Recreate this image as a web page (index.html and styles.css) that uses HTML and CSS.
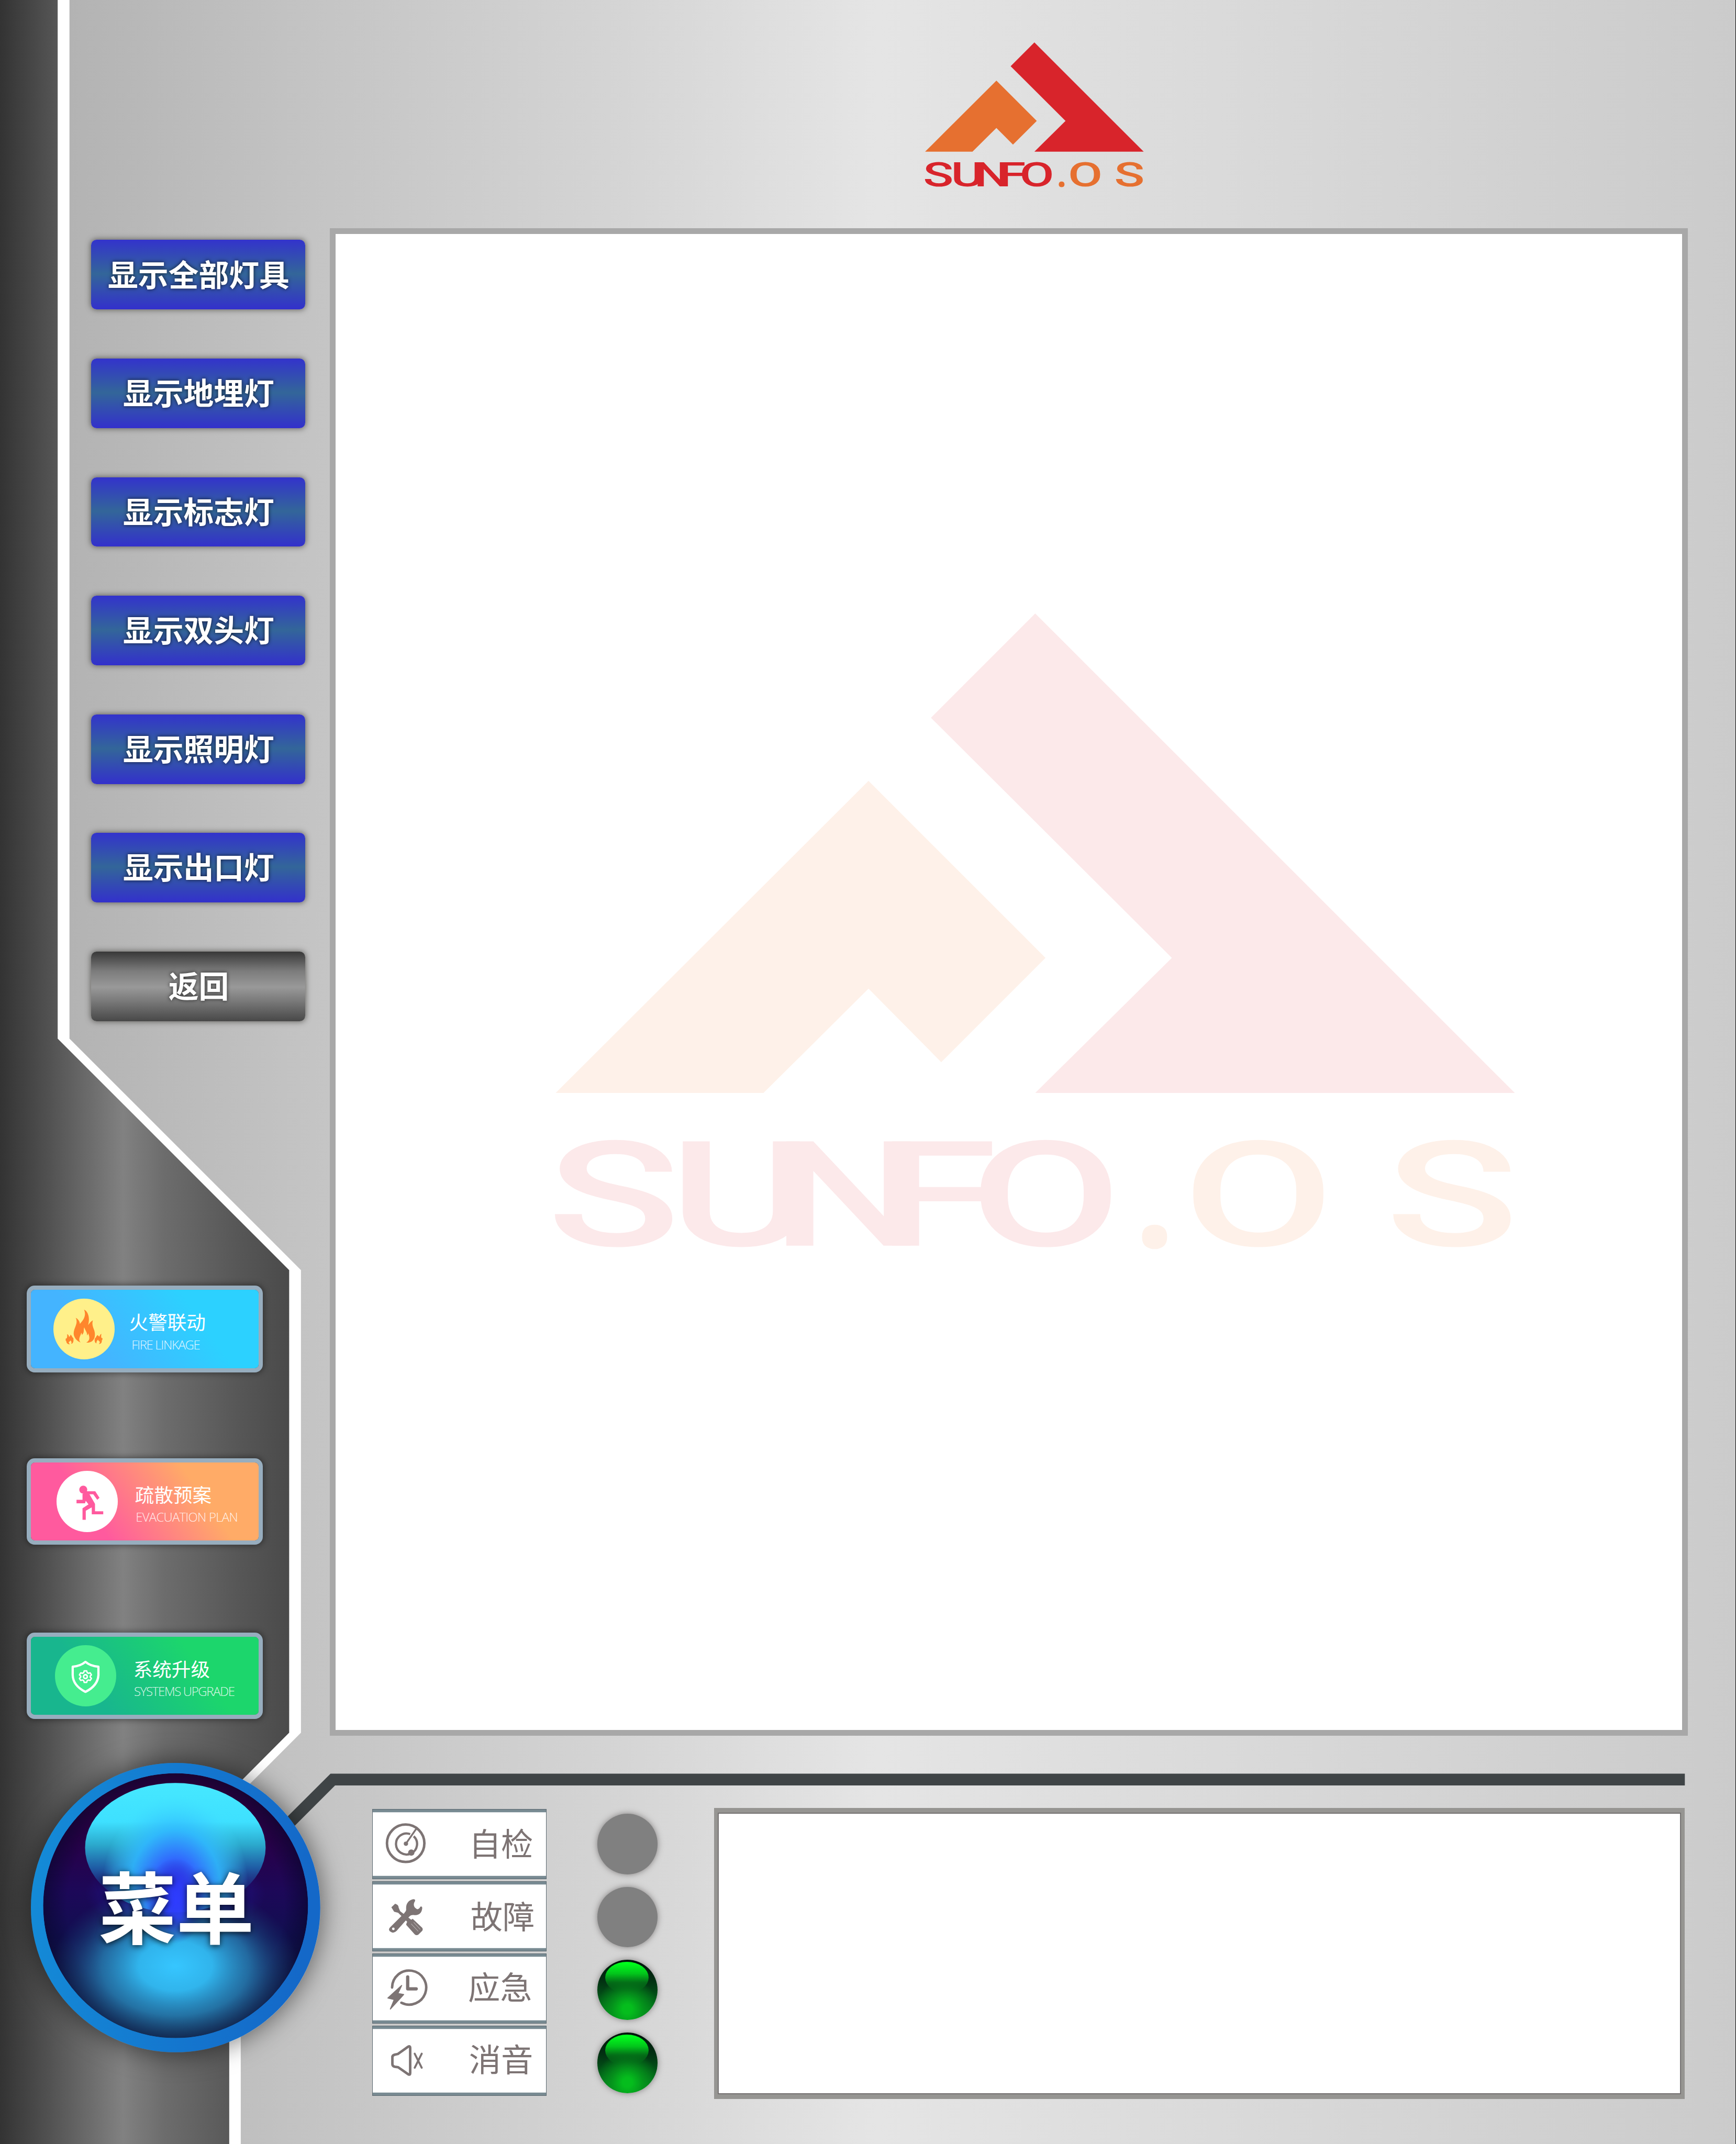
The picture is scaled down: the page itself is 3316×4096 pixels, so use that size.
FILE: index.html
```html
<!DOCTYPE html>
<html lang="zh-CN">
<head>
<meta charset="utf-8">
<title>SUNFO.OS</title>
<link rel="stylesheet" href="styles.css">
</head>
<body>
<div class="page">
  <svg class="frame" viewBox="0 0 3461 4275" preserveAspectRatio="none" aria-hidden="true">
    <defs>
      <linearGradient id="steel" gradientUnits="userSpaceOnUse" x1="0" y1="0" x2="577" y2="0">
        <stop offset="0" stop-color="#333"/>
        <stop offset=".14" stop-color="#4c4c4c"/>
        <stop offset=".36" stop-color="#757575"/>
        <stop offset=".425" stop-color="#818181"/>
        <stop offset=".57" stop-color="#6c6c6c"/>
        <stop offset=".82" stop-color="#575757"/>
        <stop offset="1" stop-color="#4a4a4a"/>
      </linearGradient>
    </defs>
    <path fill="#fff" d="M0 0H138.500V2071L600 2532.500V3455L480 3575V4275H0Z"/>
    <path fill="url(#steel)" d="M0 0H115V2071L576.500 2532.500V3455L457 3575V4275H0Z"/>
    <path fill="#3f4446" d="M659 3536.500H3359V3560H668L500 3728V3695Z"/>
    <path fill="#000" d="M3460 0h1v4275h-1z"/>
  </svg>

  <aside class="sidebar">
    <nav class="filters">
      <button class="filter">显示全部灯具</button>
      <button class="filter">显示地埋灯</button>
      <button class="filter">显示标志灯</button>
      <button class="filter">显示双头灯</button>
      <button class="filter">显示照明灯</button>
      <button class="filter">显示出口灯</button>
      <button class="filter filter--back">返回</button>
    </nav>

    <div class="features">
      <a class="feature feature--fire">
        <span class="feature__icon">
          <svg viewBox="0 0 364 364">
            <g fill="#ff862c">
              <path d="M183 66C207 76 220 115 207 158C214 151 224 134 236 130C225 165 248 180 248 214C248 244 232 264 196 263C225 247 213 221 208 206C207 213 204 217 200 219C205 204 190 190 184 171C178 190 187 202 170 217C170 210 169 206 166 204C164 221 143 244 163 262C137 252 121 229 121 207C121 176 151 147 133 114C147 121 158 136 158 151C174 132 200 105 183 66Z"/>
              <path d="M82 212C90 216 94 223 93 229C99 225 103 221 101 215C114 222 109 230 119 235C122 254 119 267 106 270C112 259 105 253 101 249C101 254 96 256 92 259C91 264 94 269 99 273C84 273 77 263 77 253C70 251 75 243 74 237C81 242 84 228 82 212Z"/>
              <path d="M287 210C279 214 275 221 276 227C270 225 266 221 266 217C252 224 259 230 249 235C242 252 250 265 257 267C256 256 262 249 267 245C267 252 273 253 277 257C278 263 275 267 271 271C286 270 290 261 289 249C295 246 292 239 294 235C286 239 283 228 287 210Z"/>
            </g>
          </svg>
        </span>
        <span class="feature__text"><b>火警联动</b><small>FIRE LINKAGE</small></span>
      </a>
      <a class="feature feature--plan">
        <span class="feature__icon">
          <svg viewBox="0 0 122 122">
            <g fill="#ff5a9e">
              <circle cx="53.500" cy="37.500" r="8"/>
              <path d="M52 46.500 60 41H77.500L86 54 81.500 58 73.500 47H66L77 66V81H93.500V87H70.500V73L58.500 80V98H52V75L64 67 58.500 60 57 65H40V58H52Z"/>
            </g>
          </svg>
        </span>
        <span class="feature__text"><b>疏散预案</b><small>EVACUATION PLAN</small></span>
      </a>
      <a class="feature feature--upgrade">
        <span class="feature__icon">
          <svg viewBox="0 0 122 122" fill="none" stroke="#fff" stroke-linejoin="round">
            <path stroke-width="4.500" d="M61 33.500C68 39.500 76 42.500 87 43V60C86 76 76 86 61 93.500C46 86 36 76 35.500 60V43C46 42.500 54 39.500 61 33.500Z"/>
            <circle stroke-width="3" cx="61" cy="63" r="3.800"/>
            <path stroke-width="2.800" d="M58.500 51.500H63.500L64.500 55 67 56.300 70.500 55.400 73 59.500 70.500 62V64L73 66.500 70.500 70.600 67 69.700 64.500 71 63.500 74.500H58.500L57.500 71 55 69.700 51.500 70.600 49 66.500 51.500 64V62L49 59.500 51.500 55.400 55 56.300 57.500 55Z"/>
          </svg>
        </span>
        <span class="feature__text"><b>系统升级</b><small>SYSTEMS UPGRADE</small></span>
      </a>
    </div>
  </aside>

  <main class="content">
    <header class="brand">
      <svg class="logo" viewBox="0 0 1306 866">
        <path class="logo__red" d="M653 0 511 142 839 469 653 653H1306Z"/>
        <path class="logo__orange" d="M426 228 667 469 525 611 426 511 283 653H0Z"/>
        <text class="logo__red" transform="translate(0 861) scale(1.5 1)" x="-8 103 195 291 376">SUNFO</text>
        <text class="logo__orange logo__dot" x="787" y="863">.</text>
        <text class="logo__orange" transform="translate(0 861) scale(1.5 1)" x="569 753">OS</text>
      </svg>
    </header>
    <section class="map">
      <svg class="logo logo--watermark" viewBox="0 0 1306 866">
        <path class="logo__red" d="M653 0 511 142 839 469 653 653H1306Z"/>
        <path class="logo__orange" d="M426 228 667 469 525 611 426 511 283 653H0Z"/>
        <text class="logo__red" transform="translate(0 861) scale(1.5 1)" x="-8 103 195 291 376">SUNFO</text>
        <text class="logo__orange logo__dot" x="787" y="863">.</text>
        <text class="logo__orange" transform="translate(0 861) scale(1.5 1)" x="569 753">OS</text>
      </svg>
    </section>

    <section class="console">
      <div class="controls">
        <button class="control">
          <svg viewBox="0 0 100 100" fill="none" stroke="#7d7474">
            <circle cx="50" cy="48.500" r="37.300" stroke-width="5"/>
            <path stroke-width="4.500" d="M66 34.500A21 21 0 1 1 59 30.200"/>
            <path stroke-width="3.500" d="M50.500 49.400 71.500 19"/>
            <circle cx="50.500" cy="49.400" r="4.300" fill="#7d7474" stroke="none"/>
            <circle cx="61.200" cy="67" r="6.300" fill="#7d7474" stroke="none"/>
          </svg>
          <span>自检</span>
        </button>
        <button class="control control--fault">
          <svg viewBox="0 0 100 100" fill="#7d7474">
            <path d="M19 72 47 44C49 41 51 40 51 36C50 26 55 18 65 16Q70 16 68.500 20C65 25 65 32 73 36Q78 35 79 31Q83 29 83 34C82 44 76 49 66 47.500Q60 47 57 51L32 79Q26 85 20 81T19 72ZM25.400 72.500A2.600 2.600 0 1 0 25.400 77.700 2.600 2.600 0 1 0 25.400 72.500Z" fill-rule="evenodd"/>
            <path d="M21.500 32 29 25Q36 27 36 33L39 40 61 57 64 55 83 73Q85 76 83 79L75 87Q71 89 68 86L51 67Q51 64 53 61L35 43 27 41Z"/>
            <path d="M61 65 75 80M66 62 79 76" stroke="#b5afaf" stroke-width="1.200"/>
          </svg>
          <span>故障</span>
        </button>
        <button class="control control--emergency">
          <svg viewBox="0 0 100 100" fill="none" stroke="#7d7474" stroke-width="5" stroke-linecap="round">
            <path d="M22.900 48A34 34 0 1 1 41.500 78.500"/>
            <path d="M54 27V50.700H71" stroke-width="6.500" stroke-linejoin="round"/>
            <path fill="#7d7474" stroke-width="2" stroke-linejoin="round" d="M42 44 14.500 69 27.300 72 19.500 91 46 62 34.500 60Z"/>
          </svg>
          <span>应急</span>
        </button>
        <button class="control control--mute">
          <svg viewBox="0 0 100 100" fill="none" stroke="#7d7474" stroke-width="5" stroke-linecap="round" stroke-linejoin="round">
            <path d="M28 38 34.500 36.500 55 22Q59 20 59 24V75Q59 79 55 77L35 63 28 62Q23.500 61 23.500 57V43Q23.500 39 28 38Z"/>
            <path stroke-width="4" d="M68 36 82 64M82 36 68 64"/>
          </svg>
          <span>消音</span>
        </button>
      </div>
      <div class="lamps">
        <i class="lamp"></i>
        <i class="lamp"></i>
        <i class="lamp lamp--on"></i>
        <i class="lamp lamp--on"></i>
      </div>
      <div class="log"></div>
    </section>
  </main>

  <button class="menu">
    <svg class="menu__orb" viewBox="0 0 577 577" aria-hidden="true">
      <defs>
        <linearGradient id="rim" x1="0" x2="1" y1="0" y2=".1"><stop offset="0" stop-color="#148cd8"/><stop offset="1" stop-color="#1468c8"/></linearGradient>
        <linearGradient id="glass" x1="0" x2="0" y1="0" y2="1">
          <stop offset="0" stop-color="#34003c"/><stop offset=".25" stop-color="#290048"/>
          <stop offset=".45" stop-color="#1c0858"/><stop offset=".62" stop-color="#110f50"/>
          <stop offset=".85" stop-color="#152b5c"/><stop offset="1" stop-color="#184268"/>
        </linearGradient>
        <radialGradient id="edge"><stop offset=".82" stop-color="#08062c" stop-opacity="0"/><stop offset="1" stop-color="#08062c" stop-opacity=".6"/></radialGradient>
        <radialGradient id="glow">
          <stop offset="0" stop-color="#36c6ff"/><stop offset=".3" stop-color="#32bcf4" stop-opacity=".95"/>
          <stop offset=".6" stop-color="#2a90c4" stop-opacity=".68"/><stop offset=".8" stop-color="#22689c" stop-opacity=".32"/>
          <stop offset="1" stop-color="#1c4a80" stop-opacity="0"/>
        </radialGradient>
        <linearGradient id="shine" x1="0" x2="0" y1="0" y2="1">
          <stop offset="0" stop-color="#46e8ff"/><stop offset=".3" stop-color="#3ee0ff"/>
          <stop offset=".48" stop-color="#2ba8cc"/><stop offset=".66" stop-color="#1e5fa8" stop-opacity=".95"/>
          <stop offset=".95" stop-color="#1c1f80" stop-opacity="0"/>
        </linearGradient>
        <radialGradient id="core">
          <stop offset="0" stop-color="#2e38ff"/><stop offset=".3" stop-color="#3169ff" stop-opacity=".98"/>
          <stop offset=".62" stop-color="#30b8ff" stop-opacity=".88"/><stop offset="1" stop-color="#40dcff" stop-opacity="0"/>
        </radialGradient>
        <radialGradient id="spot"><stop offset="0" stop-color="#2e3cff"/><stop offset=".4" stop-color="#2c38f4" stop-opacity=".8"/><stop offset="1" stop-color="#2418a0" stop-opacity="0"/></radialGradient>
        <clipPath id="cap"><ellipse cx="288" cy="169" rx="180" ry="129"/></clipPath>
        <clipPath id="ball"><circle cx="288.500" cy="284.500" r="264"/></clipPath>
      </defs>
      <circle cx="288.500" cy="288.500" r="288.500" fill="url(#rim)"/>
      <g clip-path="url(#ball)">
        <circle cx="288.500" cy="284.500" r="264" fill="url(#glass)"/>
        <circle cx="288.500" cy="284.500" r="264" fill="url(#edge)"/>
        <ellipse cx="288" cy="260" rx="180" ry="80" fill="url(#spot)" opacity=".8"/>
        <ellipse cx="288" cy="405" rx="245" ry="165" fill="url(#glow)"/>
      </g>
      <ellipse cx="288" cy="169" rx="180" ry="129" fill="url(#shine)"/>
      <g clip-path="url(#cap)"><ellipse cx="288" cy="245" rx="145" ry="180" fill="url(#core)"/></g>
      <ellipse cx="288" cy="275" rx="60" ry="85" fill="url(#spot)"/>
    </svg>
    <span class="menu__label">菜单</span>
  </button>
</div>
</body>
</html>
```

FILE: styles.css
```css
/* 1rem = 10 units of the 3461-unit wide panel drawing */
html {
  font-size: calc(100vw / 346.1);
}

*,
*::before,
*::after {
  box-sizing: border-box;
}

body {
  margin: 0;
  overflow: hidden;
  font-family: "Noto Sans CJK SC", "Noto Sans", sans-serif;
}

button {
  padding: 0;
  border: 0;
  background: none;
  font-family: inherit;
}

svg {
  display: block;
}

.page {
  position: relative;
  display: flex;
  width: 100vw;
  height: 100vh;
  overflow: hidden;
  background: linear-gradient(90deg, #b3b3b3 4%, #c4c4c4 18%, #d5d5d5 36%, #e5e5e5 50.5%, #dcdcdc 66%, #cbcbcb 100%);
}

.frame {
  position: absolute;
  inset: 0;
  width: 100%;
  height: 100%;
}

.sidebar {
  position: relative;
  flex: none;
  width: 65.75rem;
}

.filters {
  display: flex;
  flex-direction: column;
  gap: 9.79rem;
  padding: 47.85rem 0 0 18.2rem;
}

.filter {
  width: 42.6rem;
  height: 13.86rem;
  padding: 0 0 0.5rem 0.2rem;
  border-radius: 1.1rem;
  background: linear-gradient(#3333cc, #336699 49%, #3330cc);
  box-shadow: 0 0 1.1rem 0.1rem rgba(70, 68, 64, 0.75);
  color: #fff;
  font-size: 6.03rem;
  font-weight: 700;
  line-height: 1;
  text-shadow: 0 0 0.8rem rgba(0, 0, 0, 0.75);
}

.filter--back {
  background: linear-gradient(#383838, #7c7c7c 28%, #999 51%, #7b7b7b 70%, #484848);
}

.features {
  display: flex;
  flex-direction: column;
  gap: 17.1rem;
  padding: 52.75rem 0 0 5.35rem;
}

.feature {
  display: flex;
  align-items: center;
  width: 47.05rem;
  height: 17.3rem;
  border: 0.87rem solid #97adbe;
  border-radius: 1.6rem;
  box-shadow: 0 0 1.2rem 0.2rem rgba(0, 0, 0, 0.4);
  color: #fff;
}

.feature--fire {
  padding-left: 4.5rem;
  background: linear-gradient(55deg, #44b4ff 28%, #2cd1ff 72%) padding-box;
}

.feature--plan {
  padding-left: 5.13rem;
  background: linear-gradient(55deg, #ff5a9e 28%, #ffab67 72%) padding-box;
}

.feature--upgrade {
  margin-top: 0.35rem;
  padding-left: 4.8rem;
  background: linear-gradient(55deg, #18b68e 28%, #1cd66c 72%) padding-box;
}

.feature__icon {
  flex: none;
  width: 12.15rem;
  height: 12.15rem;
  border-radius: 50%;
  background: #fff08a;
}

.feature--plan .feature__icon {
  background: #fff;
}

.feature--upgrade .feature__icon {
  background: #45ed8f;
}

.feature__text {
  display: flex;
  flex-direction: column;
  gap: 0.75rem;
  margin-left: 2.9rem;
  padding-top: 0.9rem;
  white-space: nowrap;
}

.feature--plan .feature__text,
.feature--upgrade .feature__text {
  margin-left: 3.45rem;
}

.feature__text b {
  font-size: 3.82rem;
  font-weight: 400;
  line-height: 4.6rem;
}

.feature__text small {
  font-family: "Open Sans", "Noto Sans", sans-serif;
  font-size: 2.5rem;
  font-weight: 300;
  line-height: 3rem;
  letter-spacing: -0.14rem;
  opacity: 0.85;
}

.feature--fire small {
  margin-left: 0.5rem;
}

.feature--plan small {
  margin-left: 0.15rem;
  letter-spacing: -0.08rem;
}

.feature--upgrade small {
  margin-left: 0.15rem;
}

.content {
  position: relative;
  flex: none;
  display: flex;
  flex-direction: column;
  width: 270.75rem;
}

.brand {
  height: 45.55rem;
  padding: 8.5rem 0 0 118.7rem;
}

.logo {
  --red: #d8242b;
  --orange: #e67030;
  width: 43.6rem;
  height: 28.9rem;
  overflow: visible;
  font-family: Roboto, "Liberation Sans", sans-serif;
  font-size: 200px;
  font-weight: 500;
}

.logo--watermark {
  --red: #fce9ea;
  --orange: #fef1e9;
  width: 191.3rem;
  height: 126.8rem;
}

.logo__red {
  fill: var(--red);
}

.logo__orange {
  fill: var(--orange);
}

.logo__dot {
  font-family: "Open Sans", "Noto Sans", sans-serif;
  font-weight: 700;
}

.map {
  height: 300.6rem;
  padding: 75.65rem 0 0 43.8rem;
  border: 1.15rem solid #a8a8a8;
  background: #fff;
}

.console {
  display: flex;
  align-items: flex-start;
  padding: 14.35rem 0.6rem 0 8.45rem;
}

.controls {
  display: flex;
  flex-direction: column;
  gap: 0.42rem;
  width: 34.8rem;
  margin-top: 0.2rem;
}

.control {
  display: flex;
  align-items: center;
  justify-content: space-between;
  height: 14rem;
  padding: 0 2.6rem 0 1.6rem;
  border: 0.17rem solid #5c6970;
  background: #fff;
  box-shadow: inset 0 0.55rem #788a92, inset 0 -0.55rem #788a92;
  color: #7d7474;
  font-size: 6.4rem;
  line-height: 1;
}

.control svg {
  width: 10rem;
  height: 10rem;
}

.control span {
  margin-top: -0.6rem;
}

.control--fault {
  padding-right: 2.3rem;
}

.control--emergency {
  padding-right: 2.8rem;
}

.control--mute {
  padding-right: 2.6rem;
}

.control--emergency span,
.control--mute span {
  margin-top: -1.1rem;
}

.lamps {
  display: flex;
  flex-direction: column;
  gap: 2.47rem;
  margin: 1.2rem 0 0 10.05rem;
}

.lamp {
  position: relative;
  width: 12.06rem;
  height: 12.06rem;
  border-radius: 50%;
  background: #808080;
  box-shadow: 0 0 1.2rem rgba(60, 55, 55, 0.55);
}

.lamp--on {
  background:
    radial-gradient(ellipse 52% 52% at 50% 82%, #05bd1d 15%, rgba(5, 160, 28, 0.75) 50%, rgba(4, 120, 24, 0) 100%),
    linear-gradient(#02160c 5%, #023012 35%, #024a16 55%, #04751d 85%, #05801f);
}

.lamp--on::before {
  content: "";
  position: absolute;
  top: 3.5%;
  left: 13.5%;
  width: 71.5%;
  height: 52%;
  border-radius: 50%;
  background: linear-gradient(#00ff1c 5%, #02c41b 38%, rgba(3, 120, 24, 0.85) 65%, rgba(2, 74, 22, 0) 98%);
}

.log {
  width: 193.5rem;
  height: 58.05rem;
  margin-left: 11.25rem;
  border: solid #969592;
  border-width: 1rem 0.8rem;
  background: #fff;
  box-shadow: inset 0 0 0 0.2rem #737070;
}

.menu {
  position: absolute;
  top: 351.5rem;
  left: 6.2rem;
  display: grid;
  place-items: center;
  width: 57.7rem;
  height: 57.7rem;
  border-radius: 50%;
  box-shadow: 0 0 5rem 0.3rem rgba(0, 0, 0, 0.5);
}

.menu__orb {
  grid-area: 1 / 1;
  width: 100%;
  height: 100%;
}

.menu__label {
  z-index: 1;
  grid-area: 1 / 1;
  padding: 0 0 1.2rem 0.2rem;
  color: #fff;
  font-size: 15.5rem;
  font-weight: 700;
  line-height: 1;
  text-shadow: 0 0.2rem 1.2rem rgba(0, 0, 0, 0.8);
}
```
